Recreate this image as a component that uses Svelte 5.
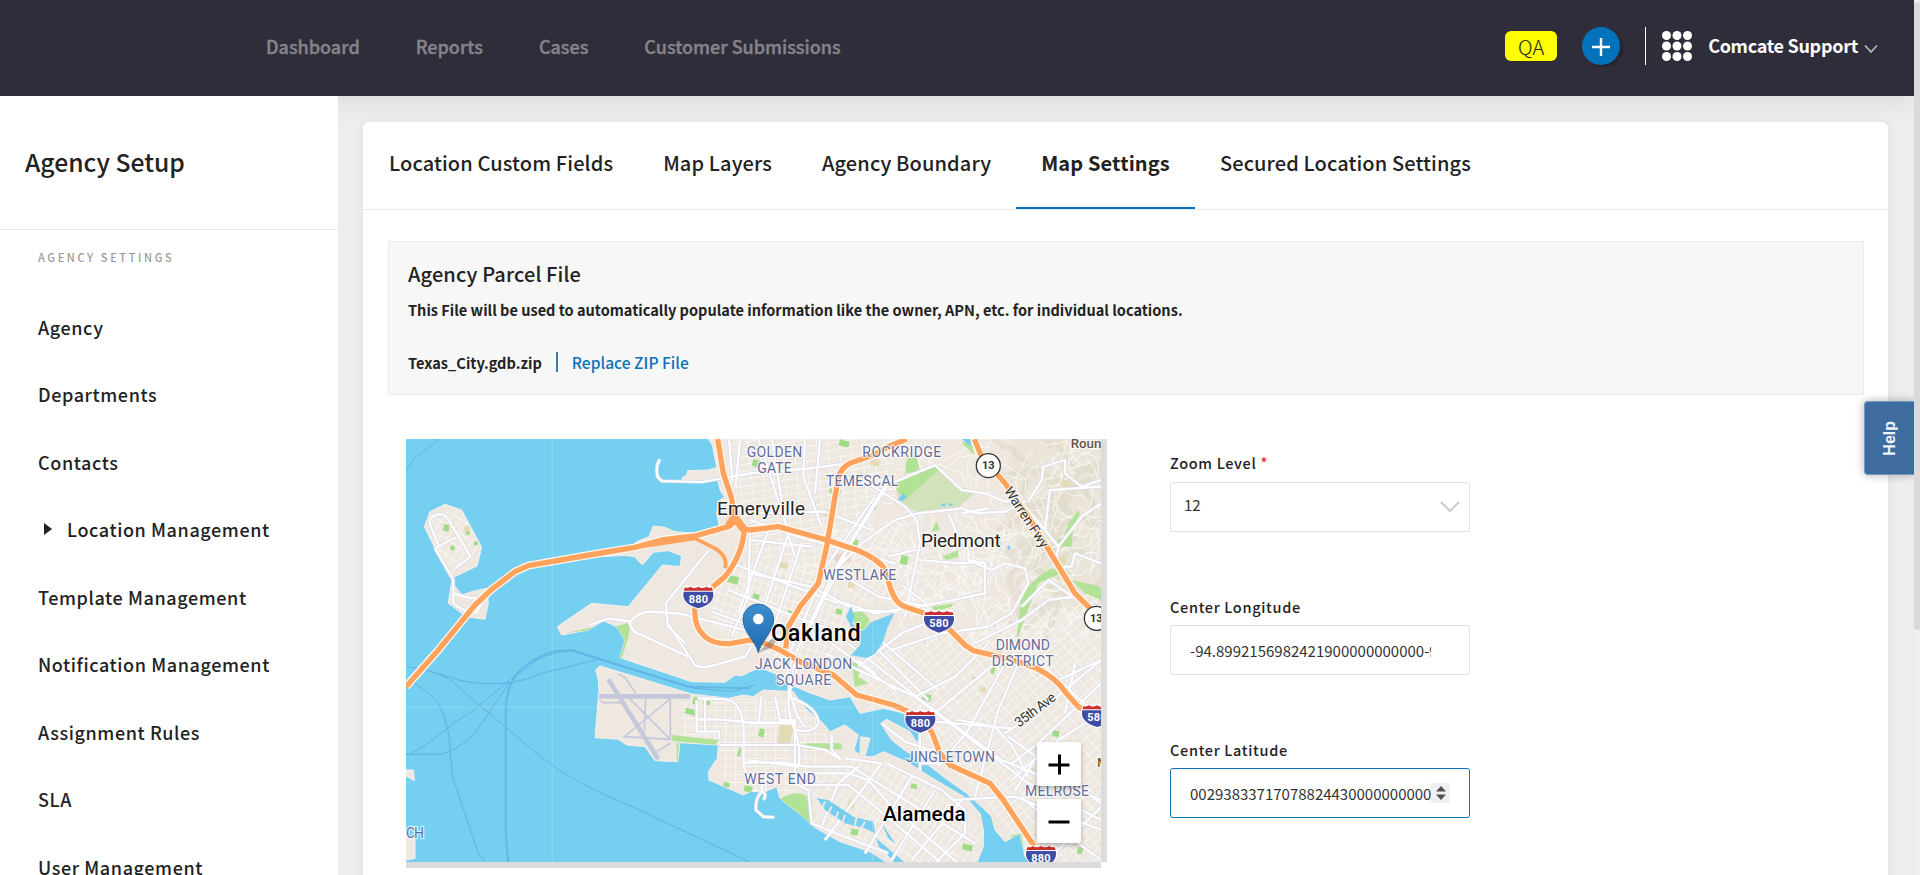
<script>
  const nav = ['Dashboard', 'Reports', 'Cases', 'Customer Submissions'];
  const menu = [
    'Agency', 'Departments', 'Contacts', 'Location Management', 'Template Management',
    'Notification Management', 'Assignment Rules', 'SLA', 'User Management'
  ];
  const tabs = ['Location Custom Fields', 'Map Layers', 'Agency Boundary', 'Map Settings', 'Secured Location Settings'];
  const active = 'Map Settings';

  // Map geometry, three units to a pixel
  const mainland =
    'M940 27L952 45L965 112L940 120L878 122L875 136L862 142V150H968L976 182L988 200L970 215L965 250L973 290L900 310L840 305L810 292L775 288L762 320L725 335L700 360L620 380L690 376L718 380L742 405L775 367L820 362L860 377L855 410L802 405L700 530L590 520L487 590L500 615L580 600L625 572L665 590L690 630L675 683L890 755L990 757L1020 735L1040 738L1065 725L1095 712L1150 735L1190 765L1235 785L1305 810L1365 800L1395 850L1465 835L1530 850L1575 910L1565 945L1575 985L1645 1040L1715 1090L1765 1135L1790 1160L1800 1200L1830 1235L1875 1210L1890 1280L1915 1300H2130V27Z';
  const alameda =
    'M602 720L615 708L890 792L1000 805L1045 795L1075 800L1105 780L1195 785L1230 835L1280 875L1305 905L1350 885L1390 915L1377 960L1395 975L1396 920L1425 925L1410 980L1435 980L1465 965L1535 995L1605 1040L1715 1105L1755 1150L1765 1200V1250L1745 1300H1535L1475 1250L1440 1220L1450 1250L1500 1300H1480L1425 1265L1335 1235L1255 1190L1225 1160L1185 1130L1155 1105L1145 1070L1110 1085L1065 1085L1045 1095L942 1050L940 1025L967 985L970 945L855 938L848 995L780 992L750 950L695 945L670 928L600 923L612 780L610 750Z';
  const islands =
    'M88 290L105 245L150 223L200 240L260 352L246 408L176 442L120 355ZM170 455L200 495L230 485L275 475L280 520L270 568L215 560L160 520ZM33 1020H55L58 1052L33 1038ZM33 1215L60 1228V1285L33 1290ZM1457 880L1475 868L1545 905L1570 945L1575 985L1535 965L1490 930Z';
  const highways = [
    'M33 770L130 660L240 525L290 478L360 425L400 407L600 372L720 352L800 330L900 318L1000 290L1022 272',
    'M968 27L985 130L1010 205L1018 270L1000 290',
    'M1018 265Q1040 300 1065 300L1150 290L1295 330L1385 360Q1455 390 1470 420L1485 470Q1500 520 1530 530L1632 565L1665 600L1710 645L1735 662L1855 690L1925 715Q1985 745 2010 785L2050 830L2118 870',
    'M1535 27L1480 50L1435 75L1365 100Q1335 115 1330 145L1320 200L1295 350L1270 460L1215 530L1180 590L1172 655',
    'M1048 295Q1045 370 990 440L930 490L900 530Q895 590 930 620Q960 645 1010 640L1065 630L1110 640L1155 660L1215 695L1315 735L1385 795L1495 825L1565 855L1610 905L1635 970L1665 1005L1785 1060L1825 1110L1915 1245L1940 1300',
    'M1738 27L1760 80L1830 160L1900 260L1955 350L2040 490L2090 540L2118 570'
  ];
  const arterials = [
    'M795 88Q780 110 788 140L800 153L920 156L1065 130L1240 115L1400 95',
    'M585 585L640 565L705 575Q730 545 770 545L850 550L1090 610L1180 640M705 575Q705 605 740 615L880 680M815 585L870 640',
    'M940 362L812 520L818 580L870 660L900 705Q918 718 960 705L1050 680L1070 650',
    'M1035 27L1022 170M1002 27L1012 150M1090 27L1175 290M1130 27L1175 300L1200 380M1230 27L1225 140L1280 290M1275 27L1260 190',
    'M1500 130L1330 400L1160 760M1475 160L1370 330L1320 440L1220 640M1440 200L1300 400',
    'M1065 270L1210 320L1500 400M1065 330L1250 350M1065 250L1290 245L1430 300M1065 430L1250 470L1380 540L1510 545M1000 480L1200 560L1370 620M950 545L1160 620M1010 400L1330 520',
    'M1065 310L1060 500L1010 620M1120 300L1030 550M1180 310L1080 620M1220 340L1120 640M1270 470L1170 700',
    'M1500 155L1620 105L1700 180L1770 190L1830 215L1890 215L1830 245L1740 250L1700 235L1570 250L1500 270L1400 340L1300 440',
    'M1420 160L1530 230L1565 270L1575 340L1530 560M1660 250L1690 320L1720 360V390L1770 400V490L1600 525L1520 465M1480 380L1560 360M1570 390L1700 400L1765 395',
    'M1720 390L1790 420L1830 400L1890 415L1900 460L1850 550L1780 590L1640 610L1490 660M1700 250L1780 235',
    'M1350 440L1450 500L1600 530M1350 520L1440 550L1620 520M1390 710L1520 610L1640 560L1690 620',
    'M1290 670L1410 730L1560 800L1900 1060L2118 1170M1360 640L1590 820L1820 990L2118 1110M1400 610L1600 810M1310 640L1500 780M1420 600L1630 780',
    'M1390 690L1440 730M1560 800L1680 740L1780 640M1600 865L1800 700M1630 1010L1720 900L1830 700M1740 1100L1810 840L1870 700M1830 910L1950 830L2118 690M1850 1000L1930 940L2118 760M1690 870L1800 890L1850 945L1900 1040M1560 870L1850 895',
    'M1860 1080L1920 990L1990 930L2118 850M1840 920L2118 1120M1850 1050L1960 950M1670 1110L1860 1100L2118 1200M1900 660L2118 870M1970 760L2118 690M2010 850L2040 700M1950 1300L2118 1130M1880 1100L1970 1180L2118 1290M1840 1140L1950 1300',
    'M1900 215L1940 150L1945 110L2010 90L2010 130L2060 170L2118 150M1890 230L1950 300L1990 350L1980 410L2030 410L2040 370L2118 400M1950 300L1965 180L2118 170M1990 350L2060 260L2118 220M1880 530L1960 450L2070 525L2118 530M1740 640L1880 570L1960 510L2040 500',
    'M905 870V905L972 905V925M908 805Q980 805 1010 812Q1045 840 1046 900V1010L1060 1040M905 810V868H970L1065 877H1200M975 945H1205L1290 960L1340 990M930 810V905M1046 998H1170L1235 1010L1370 1010L1530 1110L1740 1240',
    'M1140 800L1155 870H1200V1060L1240 1080L1250 1180L1350 1220L1480 1270M1200 700Q1160 820 1200 900Q1220 960 1210 1010M1180 800Q1270 830 1270 880Q1260 910 1200 900M1220 680L1185 780Q1200 860 1230 890',
    'M1065 880H1200M1065 945H1205M1210 1010L1060 990M1225 1030H1360L1420 1050L1490 1130L1690 1300M1225 1065H1360L1440 1130L1640 1300',
    'M1460 1000L1290 1230M1475 1000L1640 1080L1710 1140V1210L1620 1300M1550 1040L1410 1270M1620 1080L1490 1290M1390 1010L1330 1060L1280 1190M1700 1110L1550 1290M1350 985L1460 1000M1310 915V960L1340 990',
    'M1575 910V1020M1580 960L1640 955M1580 1000H1640M1460 880L1530 935L1590 955M1100 800L1090 880',
    'M120 355L175 450V520Q200 545 245 548L265 510M120 355L182 322M182 322M130 345L108 290Q95 260 130 253Q145 250 158 265L227 380L183 413M175 490L230 505H258',
    'M1100 1060V1085M1100 1085Q1080 1105 1083 1140L1105 1160L1138 1162M1100 1085Q1118 1090 1105 1110'
  ];

  // Winding residential streets in the hills
  let seed = 17;
  const rnd = () => ((seed = (seed * 16807) % 2147483647) / 2147483647);
  function wander(x0, x1, y0, y1, count) {
    let d = '';
    for (let i = 0; i < count; i++) {
      let x = x0 + rnd() * (x1 - x0);
      let y = y0 + rnd() * (y1 - y0);
      let a = rnd() * 6.28;
      d += `M${x.toFixed(0)} ${y.toFixed(0)}`;
      for (let k = 0; k < 6; k++) {
        a += (rnd() - 0.5) * 1.8;
        const cx = x + Math.cos(a) * 14;
        const cy = y + Math.sin(a) * 14;
        a += (rnd() - 0.5) * 1.2;
        x = cx + Math.cos(a) * 14;
        y = cy + Math.sin(a) * 14;
        d += `Q${cx.toFixed(0)} ${cy.toFixed(0)} ${x.toFixed(0)} ${y.toFixed(0)}`;
      }
    }
    return d;
  }
  const lanes = wander(1500, 2118, 27, 620, 170);
  const ridges = wander(1860, 2118, 27, 560, 34);

  const parks = [
    [1335, 28, 30, 18], [1075, 88, 22, 20], [1305, 175, 34, 14], [1420, 218, 26, 18], [1368, 325, 24, 20],
    [1002, 435, 32, 22], [1075, 490, 20, 20], [1180, 540, 22, 14], [1325, 535, 18, 16], [1520, 375, 22, 26],
    [1585, 790, 26, 20], [1790, 710, 12, 20], [1820, 700, 12, 16], [1735, 740, 10, 14], [1975, 900, 20, 18],
    [1550, 1060, 18, 14], [1705, 1240, 30, 18], [1370, 1195, 22, 18], [2050, 1250, 16, 20], [1095, 895, 16, 24],
    [873, 833, 34, 17], [897, 800, 14, 22], [925, 809, 22, 12], [987, 1055, 18, 14], [1050, 1065, 24, 18],
    [1032, 955, 8, 24], [148, 282, 17, 20], [214, 300, 12, 14], [238, 333, 12, 12], [168, 346, 12, 14]
  ];
  const blocks = [
    [1155, 395, 26, 18], [1285, 238, 26, 20], [1428, 88, 26, 18], [1390, 128, 24, 14], [1360, 455, 20, 18],
    [1155, 878, 40, 60], [1990, 380, 26, 20], [1755, 770, 20, 16], [1890, 1010, 30, 18], [2090, 1150, 22, 16],
    [1360, 1110, 20, 22], [2000, 150, 24, 20], [208, 288, 18, 14], [1800, 655, 24, 16]
  ];
  const labels = [
    ['GOLDEN', 1055, 82, 167, 'area'], ['GATE', 1087, 130, 103, 'area'], ['ROCKRIDGE', 1402, 80, 237, 'area'],
    ['TEMESCAL', 1293, 169, 217, 'area'], ['WESTLAKE', 1285, 451, 219, 'area'], ['DIMOND', 1802, 660, 163, 'area'],
    ['DISTRICT', 1790, 709, 186, 'area'], ['JACK LONDON', 1080, 718, 292, 'area'], ['SQUARE', 1143, 765, 166, 'area'],
    ['JINGLETOWN', 1533, 996, 267, 'area'], ['MELROSE', 1890, 1098, 192, 'area'], ['WEST END', 1048, 1063, 215, 'area'],
    ['CH', 33, 1225, 54, 'area'], ['Emeryville', 966, 255, 264, 'town'], ['Piedmont', 1578, 352, 239, 'town'],
    ['Oakland', 1128, 632, 269, 'city'], ['Alameda', 1464, 1172, 248, 'burg']
  ];
  const shields = [[910, 502, '880'], [1632, 575, '580'], [1576, 875, '880'], [2106, 858, '580'], [1938, 1280, '880']];
</script>

<div class="page">
  <header>
    <nav>{#each nav as n}<a>{n}</a>{/each}</nav>
    <div class="tools">
      <span class="qa">QA</span>
      <span class="add"><svg width="20" height="20" viewBox="0 0 20 20"><path d="M1 11H19M10 2V20" stroke="#fff" stroke-width="2.400" /></svg></span>
      <span class="rule"></span>
      <svg class="dots" width="30" height="30" viewBox="0 0 30 30" fill="#fff">
        {#each [4.5, 15, 25.5] as y}{#each [4.5, 15, 25.5] as x}<circle cx={x} cy={y} r="4.5" />{/each}{/each}
      </svg>
      <span class="user">Comcate Support</span>
      <svg class="down" width="14" height="10" viewBox="0 0 14 10"><path d="M1 1.500L7 8L13 1.500" fill="none" stroke="#b5b5ba" stroke-width="1.800" /></svg>
    </div>
  </header>

  <div class="body">
    <aside>
      <h1>Agency Setup</h1>
      <div class="section">AGENCY SETTINGS</div>
      <ul>
        {#each menu as m}
          <li class:sub={m === 'Location Management'}>
            {#if m === 'Location Management'}<svg width="8" height="12" viewBox="0 0 8 12"><path d="M0 0L8 6L0 12Z" fill="#222" /></svg>{/if}
            <span>{m}</span>
          </li>
        {/each}
      </ul>
    </aside>

    <main>
      <div class="card">
        <div class="tabs">{#each tabs as t}<a class:active={t === active}>{t}</a>{/each}</div>
        <section class="parcel">
          <h2>Agency Parcel File</h2>
          <p>This File will be used to automatically populate information like the owner, APN, etc. for individual locations.</p>
          <div class="file"><b>Texas_City.gdb.zip</b><i></i><a>Replace ZIP File</a></div>
        </section>

        <div class="columns">
          <div class="mapbox">
            <svg class="map" width="695" height="423" viewBox="33 27 2085 1269">
              <defs>
                <clipPath id="land"><path d={mainland + alameda + islands} /></clipPath>
                <pattern id="north" width="34" height="22" patternUnits="userSpaceOnUse" patternTransform="rotate(-9) skewX(-4)"><path d="M0 1H34M1 0V22" stroke="#fbfaf8" stroke-width="2.500" /></pattern>
                <pattern id="down" width="22" height="24" patternUnits="userSpaceOnUse" patternTransform="rotate(19)"><path d="M0 1H22M1 0V24" stroke="#fbfaf8" stroke-width="3" /></pattern>
                <pattern id="east" width="32" height="21" patternUnits="userSpaceOnUse" patternTransform="rotate(-41)"><path d="M0 1H32M1 0V21" stroke="#fbfaf8" stroke-width="2.500" /></pattern>
                <pattern id="west" width="30" height="24" patternUnits="userSpaceOnUse"><path d="M0 1H30M1 0V24" stroke="#fbfaf8" stroke-width="2.500" /></pattern>
                <pattern id="isle" width="22" height="38" patternUnits="userSpaceOnUse" patternTransform="rotate(33)"><path d="M0 1H22M1 0V38" stroke="#fbfaf8" stroke-width="2.500" /></pattern>
                <linearGradient id="pin" x2="0" y2="1"><stop offset="0" stop-color="#3b8fd0" /><stop offset="1" stop-color="#2068ad" /></linearGradient>
              </defs>
              <rect x="33" y="27" width="2085" height="1269" fill="#75cff0" />
              <g fill="none" stroke="#5fb2e6" stroke-width="3">
                <path d="M33 122L58 85L135 27M33 710Q80 712 190 750Q330 780 440 730L600 690M33 973Q70 970 175 880L230 845Q340 750 400 710Q450 665 530 662M33 973H135Q180 965 235 915Q290 840 345 755M50 755Q125 800 138 835Q165 900 165 960L173 1040L250 1270L272 1296M100 722Q160 735 205 785L450 990Q540 1060 700 1125L1065 1296M530 662L600 685L900 775L1010 785L1080 765" />
                <path d="M340 1296L332 1210V840Q335 760 375 720Q430 675 480 664L530 660L880 770L1065 775" stroke-width="6" opacity=".8" />
              </g>
              <path d={mainland + alameda + islands} fill="#eee8e1" stroke="#f5f0ec" stroke-width="3" />
              <g clip-path="url(#land)">
                <path d="M1850 27H2118V560L2000 540L1900 400L1830 270Z" fill="#e8e2d6" opacity=".7" />
                <path d={ridges} fill="none" stroke="#d9d1bd" stroke-width="16" stroke-linecap="round" opacity=".4" />
                <path d="M1000 27H1520L1450 230L1370 460L1220 430L1065 370L1000 280Z" fill="url(#north)" />
                <path d="M1010 400L1270 400L1370 530L1360 650L1220 720L960 600L930 500Z" fill="url(#down)" />
                <path d="M1300 300L1520 290L1600 520L1360 520Z" fill="url(#isle)" />
                <path d="M1380 690L1560 630L1840 570L2118 500V1296H1900L1770 1110L1570 960L1560 850L1400 790Z" fill="url(#east)" />
                <path d="M858 815L1230 800L1310 950L1180 1110L980 1060L970 945L858 935Z" fill="url(#west)" />
                <path d="M1240 1050L1400 970L1600 1060L1770 1200L1740 1296H1500L1260 1180ZM100 250L200 240L255 360L180 430L110 340Z" fill="url(#isle)" />
                <path d={lanes} fill="none" stroke="#fbfaf8" stroke-width="2.800" />
                <path d="M1500 155L1590 110H1630L1680 170L1748 182L1680 240L1570 250L1510 210Z" fill="#d2e2bb" />
                <path d="M1505 180L1510 150L1615 105L1640 112L1530 210ZM1535 90L1545 82L1565 80L1575 125L1530 130ZM1700 40L1740 75L1725 30ZM1865 620L1880 490L1930 440L1970 415L2000 430L1930 460L1895 550L1870 620ZM1985 330L2005 325L2020 280L2050 240L2055 250L2035 290L2030 350L1990 350ZM2030 450L2118 470V510L2070 490ZM1615 290L1625 275L1635 300L1610 305ZM1640 380L1690 360V380L1655 390ZM1610 530L1675 520L1670 530L1620 545ZM660 590L710 575L700 620L670 720L610 670ZM510 610L620 585L615 597ZM830 915L970 930L962 945L832 933ZM852 937L848 995L845 990V940ZM1230 940H1340V958L1240 960ZM1150 1110Q1210 1070 1250 1110L1255 1190L1185 1130ZM1850 1215L1880 1210L1890 1290L1850 1240ZM1370 550L1400 540L1425 570L1405 600L1380 590ZM1370 700L1400 690L1390 740L1420 760L1380 770Z" fill="#b2e296" />
                {#each parks as [x, y, w, h]}<rect {x} {y} width={w} height={h} fill="#a0dc86" transform="rotate(14 {x} {y})" />{/each}
                {#each blocks as [x, y, w, h]}<rect {x} {y} width={w} height={h} fill="#e3dbb3" transform="rotate(8 {x} {y})" />{/each}
                <path d="M1315 375L1365 360L1370 395L1325 402Z" fill="#efd3ca" />
                <path d="M612 799H885M640 748L790 988" fill="none" stroke="#c5c8dc" stroke-width="14" />
                <path d="M617 812L625 818H680M670 732L690 742L722 790M752 800L748 905M700 802L826 928M833 800L688 920L826 928V800M826 940L785 965" fill="none" stroke="#c5c8dc" stroke-width="5" />
              </g>
              <g fill="none" stroke-linejoin="round">
                {#each arterials as d}<path {d} stroke="#dcdcea" stroke-width="11" />{/each}
                {#each arterials as d}<path {d} stroke="#fff" stroke-width="6.500" />{/each}
              </g>
              <path d="M1353 560L1368 528L1378 560L1372 580L1385 598L1405 602L1425 578L1440 572L1498 550L1478 592L1462 640L1440 672L1415 684L1368 676L1396 645L1395 612L1368 590ZM1508 210L1525 188L1535 200L1525 212ZM1635 225L1650 218V230ZM1655 220L1673 222L1672 230ZM1835 350L1845 345V362ZM1700 27L1730 50L1725 27ZM1265 1105L1300 1110L1375 1160L1435 1175L1440 1210L1410 1195L1350 1180L1290 1140ZM1460 1180L1500 1240L1480 1225Z" fill="#75cff0" />
              <path d="M1270 1110L1260 1140M1290 1115L1275 1150M1310 1130L1295 1160M1330 1145L1320 1170M1350 1155L1340 1185M1385 1160L1380 1185M1410 1175L1395 1200" stroke="#eee8e1" stroke-width="6" />
              <g fill="none" stroke-linejoin="round">
                {#each highways as d}<path {d} stroke="#fff8ef" stroke-width="24" />{/each}
                <path d="M900 325L960 355Q1000 380 990 415M720 352L790 342L900 325" stroke="#ffa35c" stroke-width="11" />
                {#each highways as d}<path {d} stroke="#ffa35c" stroke-width="16" />{/each}
                <path d="M1000 288L1018 262L1048 300" stroke="#ffa35c" stroke-width="24" />
              </g>
              <path d="M472 27V1296M1433 27V1296M33 832H2118" stroke="#fff" stroke-width="2" opacity=".28" />

              <g transform="translate(1090 668)">
                <path d="M0 0L35 -38L60 -48L40 -15Z" fill="#555" opacity=".4" />
                <path d="M0 0C-8 -34 -46 -62 -46 -100A46 46 0 0 1 46 -100C46 -62 8 -34 0 0Z" fill="url(#pin)" stroke="#2a6ca8" stroke-width="3" />
                <circle cy="-101" r="17" fill="#fff" stroke="#2a6ca8" stroke-width="2" />
              </g>
              {#each labels as [t, x, y, w, kind]}<text class={kind} {x} {y} textLength={w}>{t}</text>{/each}
              <text class="road" transform="translate(1826 182) rotate(57)" textLength="208">Warren Fwy</text>
              <text class="road" transform="translate(1872 893) rotate(-37)" textLength="142">35th Ave</text>
              <text class="peak" x="2027" y="54">Roun</text>
              <text class="peak olive" x="2106" y="1011">M</text>

              {#each shields as [x, y, n]}
                <g transform="translate({x} {y})">
                  <path d="M-42 -30L-36 -34Q-20 -28 0 -34Q20 -28 36 -34L42 -30Q60 16 0 34Q-60 16 -42 -30Z" fill="#fff" stroke="#fff" stroke-width="5" />
                  <path d="M-44 -17H44Q52 18 0 33Q-52 18 -44 -17Z" fill="#3e4ea6" />
                  <path d="M-44 -20L-40 -30Q-33 -26 -25 -32Q-12 -24 0 -32Q12 -24 25 -32Q33 -26 40 -30L44 -20Z" fill="#cb2f2e" />
                  <text class="num" y="16" textLength="58">{n}</text>
                </g>
              {/each}
              {#each [[1780, 107], [2104, 565]] as [x, y]}
                <circle cx={x} cy={y} r="36" fill="#fff" stroke="#333" stroke-width="4" />
                <text class="num dark" {x} y={y + 11}>13</text>
              {/each}
            </svg>
            <div class="zoom">
              <button aria-label="Zoom in"><svg width="22" height="22" viewBox="0 0 22 22"><path d="M0.500 12H21.500M11.500 1.500V21.500" stroke="#000" stroke-width="3" /></svg></button>
              <button aria-label="Zoom out"><svg width="22" height="22" viewBox="0 0 22 22"><path d="M0.500 12H21.500" stroke="#000" stroke-width="3" /></svg></button>
            </div>
          </div>

          <form>
            <div class="lab">Zoom Level <em>*</em></div>
            <div class="box select"><span>12</span><svg width="20" height="12" viewBox="0 0 20 12"><path d="M1 1L10 10L19 1" fill="none" stroke="#ccc" stroke-width="2" /></svg></div>
            <div class="lab low">Center Longitude</div>
            <div class="box"><span class="value">-94.8992156982421900000000000-94</span></div>
            <div class="lab low">Center Latitude</div>
            <div class="box focus"><span class="value">00293833717078824430000000000</span><span class="spin"><svg width="10" height="14" viewBox="0 0 10 14"><path d="M0 5.500L5 0L10 5.500ZM0 8.500L5 14L10 8.500Z" fill="#505050" /></svg></span></div>
          </form>
        </div>
      </div>
    </main>
  </div>
  <div class="help"><span>Help</span></div>
  <div class="scroll"><div></div></div>
</div>

<style>
  :global(body) { overflow: hidden; }
  .page { position: relative; width: 1920px; height: 875px; overflow: hidden; background: #ededed; color: #222; font-family: "Noto Sans CJK SC", "Source Sans Pro", sans-serif; }
  header { position: relative; z-index: 2; box-sizing: border-box; width: 1914px; height: 96px; padding: 0 36px 4px 266px; display: flex; align-items: center; justify-content: space-between; background: #2f2d39; box-shadow: 0 5px 24px rgba(0,0,0,.08); }
  nav { display: flex; gap: 56px; padding-bottom: 1px; font-size: 18px; line-height: 26px; font-weight: 500; color: #85838b; -webkit-text-stroke: .4px #85838b; }
  .tools { display: flex; align-items: center; height: 38px; }
  .qa { width: 52px; height: 30px; line-height: 32px; border-radius: 6px; background: #ff0; text-align: center; font-size: 20px; font-weight: 300; }
  .add { width: 38px; height: 38px; margin-left: 25px; border-radius: 50%; background: #0272ba; display: flex; align-items: center; justify-content: center; box-shadow: 3px 2px 2px rgba(0,0,0,.2); }
  .rule { width: 1px; height: 38px; margin: 0 16px 0 25px; background: #fff; }
  .user { margin: 0 6px 2px 16px; font-size: 18px; line-height: 26px; font-weight: 700; letter-spacing: -.3px; color: #fff; white-space: nowrap; }
  .down { margin-top: 5px; }
  .body { display: flex; height: 779px; }
  aside { position: relative; z-index: 3; width: 338px; background: #fff; overflow: hidden; }
  h1 { margin: 0; height: 133px; line-height: 131px; padding-left: 25px; font-size: 24.7px; font-weight: 500; border-bottom: 1px solid #e6e6e6; }
  .section { margin: 19px 0 28px 38px; height: 16px; line-height: 16px; font-size: 11px; font-weight: 500; letter-spacing: 2.6px; color: #999; }
  ul { margin: 0; padding: 0 0 0 38px; list-style: none; }
  li { height: 67.5px; display: flex; align-items: center; font-size: 18px; letter-spacing: .6px; font-weight: 500; white-space: nowrap; }
  li.sub { padding-left: 6px; gap: 15px; }
  main { padding: 26px 26px 0 25px; }
  .card { width: 1525px; height: 760px; background: #fff; border-radius: 6px 6px 0 0; box-shadow: 0 0 8px rgba(0,0,0,.06); }
  .tabs { display: flex; height: 88px; box-sizing: border-box; padding-left: 1px; border-bottom: 1px solid #e9e9e9; font-size: 20px; line-height: 82px; letter-spacing: .12px; white-space: nowrap; }
  .tabs a { box-sizing: border-box; height: 87px; padding: 0 25px; font-weight: 500; }
  .tabs .active { font-weight: 700; border-bottom: 2px solid #0072ba; }
  .parcel { box-sizing: border-box; margin: 31px 24px 0 25px; height: 154px; padding: 20px 19px; border: 1px solid #ececec; background: #f7f7f7; }
  h2 { margin: 0; font-size: 20px; line-height: 24px; font-weight: 500; letter-spacing: .12px; }
  p { margin: 13px 0 0; font-size: 14.55px; line-height: 22px; font-weight: 700; white-space: nowrap; }
  .file { display: flex; align-items: center; margin-top: 31px; height: 20px; font-size: 14.6px; line-height: 21px; }
  .file i { width: 2px; height: 20px; margin: 0 14px; background: #3d7ba0; }
  .file a { color: #0b72b8; font-size: 15.6px; font-weight: 500; }
  .columns { display: flex; margin: 44px 0 0 43px; }
  .mapbox { position: relative; width: 701px; height: 429px; background: linear-gradient(#dcdcdc, #dcdcdc) 0 423px / 695px 6px no-repeat, linear-gradient(#dcdcdc, #dcdcdc) 695px 0 / 6px 423px no-repeat; }
  .map { display: block; }
  .map text { font-family: Roboto, sans-serif; paint-order: stroke; stroke: #fff; stroke-opacity: .8; stroke-width: 7px; stroke-linejoin: round; }
  .map .area { font-size: 42px; fill: #626c99; }
  .map .town { font-size: 57px; fill: #222; }
  .map .city { font-size: 70px; font-weight: 500; fill: #000; }
  .map .burg { font-size: 62px; font-weight: 500; fill: #000; }
  .map .road { font-size: 41px; fill: #333; }
  .map .peak { font-size: 40px; font-weight: 500; fill: #6d5146; }
  .map .olive { fill: #7a6315; }
  .map .num { font-size: 33px; font-weight: 700; fill: #fff; stroke: none; text-anchor: middle; }
  .map .dark { fill: #333; }
  .zoom { position: absolute; left: 631px; top: 303px; display: grid; gap: 13px; }
  .zoom button { width: 44px; height: 44px; padding: 0; border: 0; border-radius: 2px; background: #fff; box-shadow: 0 2px 5px rgba(0,0,0,.3); display: flex; align-items: center; justify-content: center; }
  form { width: 300px; margin: 14px 0 0 63px; }
  .lab { height: 20px; line-height: 20px; margin-bottom: 9px; font-size: 14.5px; font-weight: 500; letter-spacing: .68px; }
  .low { line-height: 22px; }
  .lab em { color: #f22; font-style: normal; }
  .box { box-sizing: border-box; height: 50px; margin-bottom: 64px; padding: 0 19px; border: 1px solid #e1e1e1; border-radius: 3px; display: flex; align-items: center; font-size: 15px; color: #333; }
  .select { padding: 0 9px 0 13px; justify-content: space-between; }
  .select span { padding-bottom: 5px; }
  .focus { border-color: #0a74b5; }
  .value { width: 241px; overflow: hidden; white-space: nowrap; }
  .spin { width: 19px; height: 20px; background: #f0f0f0; display: flex; align-items: center; justify-content: center; }
  .help { position: absolute; z-index: 4; right: 6px; top: 401px; box-sizing: border-box; width: 50px; height: 74px; border: 1px solid #7898bd; border-right: 0; border-radius: 4px 0 0 4px; background: #3f6c9f; color: #eef4fa; display: flex; align-items: center; justify-content: center; box-shadow: 0 0 10px rgba(0,0,0,.3); font: 700 16px "Liberation Sans", Arial, sans-serif; }
  .help span { writing-mode: vertical-rl; transform: rotate(180deg); }
  .scroll { position: absolute; z-index: 5; right: 0; top: 0; width: 6px; height: 875px; background: #f0f0f0; }
  .scroll div { height: 628px; margin-top: 2px; border-radius: 3px; background: #dadada; }
</style>
